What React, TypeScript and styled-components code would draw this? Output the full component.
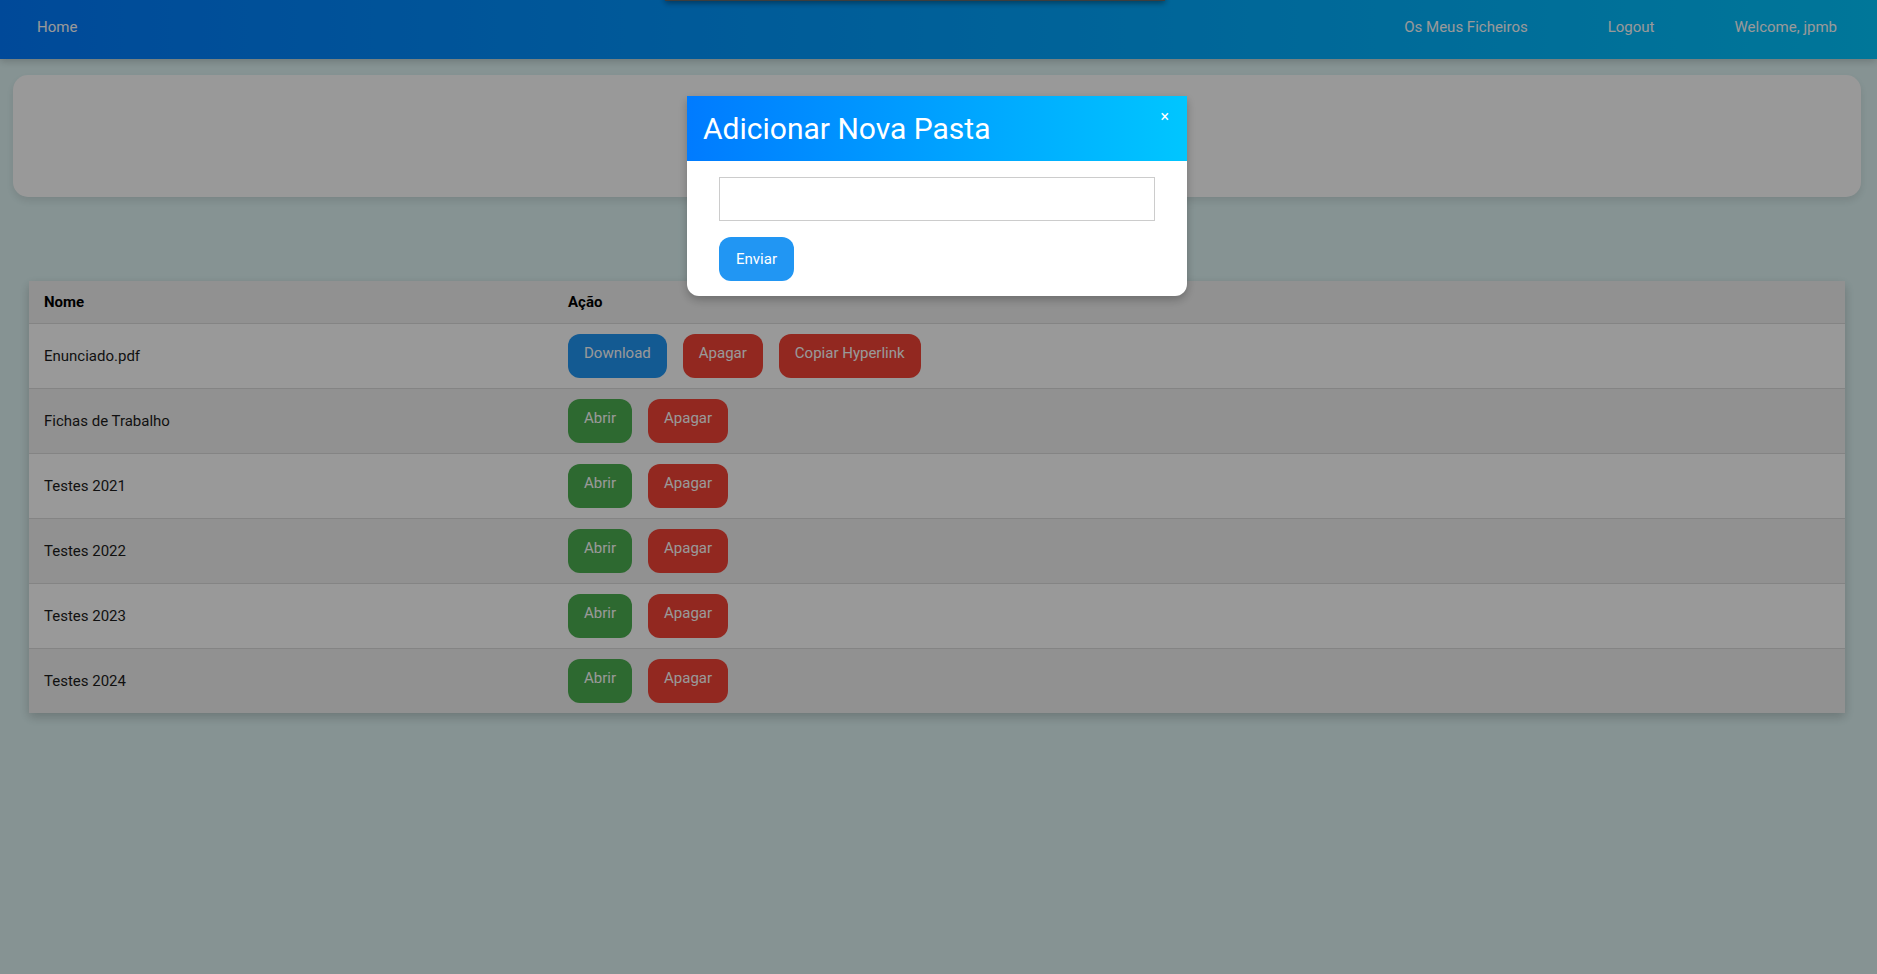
import React from "react";
import styled, { createGlobalStyle } from "styled-components";

const GlobalStyle = createGlobalStyle`
  html, body {
    margin: 0;
    padding: 0;
  }
  body {
    font-family: Roboto, "Liberation Sans", Arial, sans-serif;
    background: #e0f6f6;
    min-height: 974px;
  }
  * { box-sizing: border-box; }
`;

const Page = styled.div`
  min-height: 974px;
  background: #e0f6f6;
`;

const NavBar = styled.nav`
  display: flex;
  align-items: flex-start;
  height: 59px;
  padding-left: 37px;
  background: linear-gradient(90deg, #007bff 0%, #00c6ff 100%);
  box-shadow: 0 2px 8px rgba(0, 0, 0, 0.2);
  position: relative;
  z-index: 1;
`;

const NavLink = styled.a<{ $side?: boolean }>`
  color: #ffffff;
  text-decoration: none;
  font-size: 15px;
  line-height: 18px;
  padding: 18px ${(p) => (p.$side ? "40px" : "0")};
  white-space: nowrap;
`;

const NavRight = styled.div`
  margin-left: auto;
  display: flex;
`;

const Content = styled.main`
  padding: 16px 16px 0 13px;
`;

const TopCard = styled.section`
  height: 122px;
  background: #ffffff;
  border-radius: 15px;
  box-shadow: 0 4px 8px rgba(0, 0, 0, 0.1);
`;

const TableWrap = styled.div`
  margin: 84px 16px 0 16px;
  box-shadow: 0 4px 10px rgba(0, 0, 0, 0.2);
`;

const Table = styled.table`
  width: 100%;
  border-collapse: separate;
  border-spacing: 0;
  background: #ffffff;
  font-size: 15px;
  color: #1c1c1c;
`;

const HeadCell = styled.th<{ $w?: number }>`
  text-align: left;
  font-weight: 700;
  color: #000;
  padding: 12px 15px;
  line-height: 18px;
  background: #f2f2f2;
  border-bottom: 1px solid #dddddd;
  ${(p) => (p.$w ? `width: ${p.$w}px;` : "")}
`;

const Row = styled.tr<{ $alt: boolean }>`
  background: ${(p) => (p.$alt ? "#f2f2f2" : "#ffffff")};
  & > td {
    border-bottom: 1px solid #dddddd;
  }
  &:last-child > td {
    border-bottom: none;
  }
`;

const Cell = styled.td`
  padding: 10px 15px;
  line-height: 18px;
  vertical-align: middle;
`;

const Actions = styled.div`
  display: flex;
  gap: 16px;
`;

const ActionButton = styled.button<{ $tone: "blue" | "red" | "green" }>`
  border: none;
  border-radius: 12px;
  height: 44px;
  padding: 10px 16px 16px;
  font-family: inherit;
  font-size: 15px;
  line-height: 18px;
  color: #ffffff;
  cursor: pointer;
  background: ${(p) =>
    p.$tone === "blue" ? "#2196f3" : p.$tone === "red" ? "#f44336" : "#4caf50"};
`;

const Toast = styled.div`
  position: fixed;
  top: -49px;
  left: calc(50% - 274px);
  width: 500px;
  height: 50px;
  background: #666;
  box-shadow: 0 2px 6px rgba(0, 0, 0, 0.4);
  z-index: 2;
`;

const Overlay = styled.div`
  position: fixed;
  inset: 0;
  background: rgba(0, 0, 0, 0.4);
  z-index: 10;
  display: flex;
  justify-content: center;
  align-items: flex-start;
  padding-right: 3px;
`;

const Modal = styled.div`
  position: relative;
  margin-top: 96px;
  width: 500px;
  background: #ffffff;
  border-radius: 0 0 12px 12px;
  box-shadow: 0 4px 10px rgba(0, 0, 0, 0.25);
`;

const ModalHeader = styled.div`
  background: linear-gradient(90deg, #007bff 0%, #00c6ff 100%);
  padding: 15px 16px 15px;
  height: 65px;
`;

const ModalTitle = styled.h2`
  margin: 0;
  font-size: 30px;
  font-weight: 400;
  color: #ffffff;
  line-height: 35px;
`;

const CloseButton = styled.span`
  position: absolute;
  top: 12px;
  right: 18px;
  color: #ffffff;
  font-size: 16px;
  line-height: 18px;
  cursor: pointer;
`;

const ModalBody = styled.form`
  display: flex;
  flex-direction: column;
  align-items: flex-start;
  gap: 16px;
  padding: 16px 32px 15px;
`;

const TextInput = styled.input`
  width: 100%;
  height: 44px;
  border: 1px solid #cccccc;
  border-radius: 0;
  padding: 0 10px;
  font-family: inherit;
  font-size: 15px;
  outline: none;
`;

const SubmitButton = styled.button`
  border: none;
  border-radius: 12px;
  height: 44px;
  padding: 0 17px;
  background: #2196f3;
  color: #ffffff;
  font-family: inherit;
  font-size: 15px;
  cursor: pointer;
`;

type Item = { name: string; kind: "file" | "folder" };

const items: Item[] = [
  { name: "Enunciado.pdf", kind: "file" },
  { name: "Fichas de Trabalho", kind: "folder" },
  { name: "Testes 2021", kind: "folder" },
  { name: "Testes 2022", kind: "folder" },
  { name: "Testes 2023", kind: "folder" },
  { name: "Testes 2024", kind: "folder" },
];

export default function App() {
  return (
    <>
      <GlobalStyle />
      <Page>
        <NavBar>
          <NavLink href="#">Home</NavLink>
          <NavRight>
            <NavLink $side href="#">Os Meus Ficheiros</NavLink>
            <NavLink $side href="#">Logout</NavLink>
            <NavLink $side href="#">Welcome, jpmb</NavLink>
          </NavRight>
        </NavBar>
        <Content>
          <TopCard />
          <TableWrap>
            <Table>
              <thead>
                <tr>
                  <HeadCell $w={524}>Nome</HeadCell>
                  <HeadCell>Ação</HeadCell>
                </tr>
              </thead>
              <tbody>
                {items.map((it, i) => (
                  <Row key={it.name} $alt={i % 2 === 1}>
                    <Cell>{it.name}</Cell>
                    <Cell>
                      <Actions>
                        {it.kind === "file" ? (
                          <>
                            <ActionButton $tone="blue">Download</ActionButton>
                            <ActionButton $tone="red">Apagar</ActionButton>
                            <ActionButton $tone="red">Copiar Hyperlink</ActionButton>
                          </>
                        ) : (
                          <>
                            <ActionButton $tone="green">Abrir</ActionButton>
                            <ActionButton $tone="red">Apagar</ActionButton>
                          </>
                        )}
                      </Actions>
                    </Cell>
                  </Row>
                ))}
              </tbody>
            </Table>
          </TableWrap>
        </Content>
        <Toast />
        <Overlay>
          <Modal>
            <ModalHeader>
              <ModalTitle>Adicionar Nova Pasta</ModalTitle>
            </ModalHeader>
            <CloseButton>×</CloseButton>
            <ModalBody onSubmit={(e) => e.preventDefault()}>
              <TextInput type="text" />
              <SubmitButton type="submit">Enviar</SubmitButton>
            </ModalBody>
          </Modal>
        </Overlay>
      </Page>
    </>
  );
}
